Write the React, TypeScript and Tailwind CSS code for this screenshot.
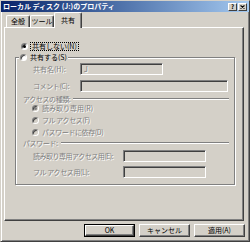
const dim = "text-[#808080] [text-shadow:1px_1px_0_#fff]";

function Radio({ checked, disabled }: { checked?: boolean; disabled?: boolean }) {
  return (
    <span
      className={`w-[7px] h-[7px] shrink-0 rounded-full border border-t-[#808080] border-l-[#808080] border-r-white border-b-white shadow-[inset_1px_1px_0_#404040] flex items-center justify-center ${
        disabled ? "bg-[#d4d0c8]" : "bg-white"
      }`}
    >
      {checked && (
        <span className={`w-[3px] h-[3px] rounded-full ${disabled ? "bg-[#808080]" : "bg-black"}`} />
      )}
    </span>
  );
}

function TextBox({ width, value }: { width: string; value?: string }) {
  return (
    <div
      className={`${width} shrink-0 h-[12px] border border-t-[#808080] border-l-[#808080] border-r-white border-b-white shadow-[inset_1px_1px_0_#404040] bg-[#d4d0c8] flex items-center pl-[3px] ${dim}`}
    >
      {value}
    </div>
  );
}

function Separator({ label }: { label: string }) {
  return (
    <div className="h-[8px] flex items-center pl-[7px] pr-[5px]">
      <span className={`tracking-[-0.4px] ${dim}`}>{label}</span>
      <div className="ml-[3px] flex-1 h-[2px] border-t border-[#808080] bg-white" />
    </div>
  );
}

function Tab({ label, selected }: { label: string; selected?: boolean }) {
  return (
    <div
      className={
        selected
          ? "relative z-10 -mb-[1px] h-[16px] w-[28px] bg-[#d4d0c8] border-t border-l border-t-white border-l-white border-r border-r-[#404040] shadow-[inset_-1px_0_0_#808080] rounded-t-[2px] flex items-center justify-center pb-[1px]"
          : "h-[12px] w-[24px] border-t border-l border-t-white border-l-white border-r border-r-[#404040] shadow-[inset_-1px_0_0_#808080] rounded-t-[2px] flex items-center justify-center"
      }
    >
      {label}
    </div>
  );
}

function Button({ label, isDefault }: { label: string; isDefault?: boolean }) {
  const inner =
    "flex-1 h-full border border-t-white border-l-white border-r-[#404040] border-b-[#404040] shadow-[inset_-1px_-1px_0_#808080] flex items-center justify-center";
  return (
    <div className={`w-[51px] h-[13px] flex ${isDefault ? "border border-black" : ""}`}>
      <div className={inner}>{label}</div>
    </div>
  );
}

export default function App() {
  return (
    <div className="w-[250px] h-[242px] bg-[#d4d0c8] font-['Noto_Sans_CJK_JP',sans-serif] text-[7px] leading-none text-black flex flex-col border border-t-[#d4d0c8] border-l-[#d4d0c8] border-r-[#404040] border-b-[#404040] shadow-[inset_1px_1px_0_#fff,inset_-1px_-1px_0_#808080]">
      {/* title bar */}
      <div className="h-[11px] bg-linear-to-r from-[#0a246a] to-[#a6caf0] flex items-center pl-[2px] pr-[2px]">
        <span className="flex-1 text-white font-bold">ローカル ディスク (J:)のプロパティ</span>
        <div className="flex gap-[1px]">
          <div className="w-[9px] h-[8px] bg-[#d4d0c8] border border-t-white border-l-white border-r-[#404040] border-b-[#404040] flex items-center justify-center font-bold text-[6px]">
            ?
          </div>
          <div className="w-[9px] h-[8px] bg-[#d4d0c8] border border-t-white border-l-white border-r-[#404040] border-b-[#404040] flex items-center justify-center">
            <svg width="5" height="4" viewBox="0 0 5 4">
              <path d="M0.5 0.5L4.5 3.5M4.5 0.5L0.5 3.5" stroke="#000" strokeWidth="1.1" />
            </svg>
          </div>
        </div>
      </div>

      {/* tabs */}
      <div className="h-[15px] flex items-end pl-[5px]">
        <Tab label="全般" />
        <Tab label="ツール" />
        <Tab label="共有" selected />
      </div>

      {/* panel */}
      <div className="ml-[3px] w-[240px] h-[194px] border border-t-white border-l-white border-r-[#404040] border-b-[#404040] shadow-[inset_-1px_-1px_0_#808080] flex flex-col">
        <div className="mt-[14px] ml-[16px] h-[8px] flex items-center">
          <Radio checked />
          <span className="ml-[2px] h-[9px] px-[1px] border border-dotted border-black flex items-center">
            共有しない(N)
          </span>
        </div>

        <div className="mt-[7px] ml-[10px] w-[220px] border border-[#808080] shadow-[inset_1px_1px_0_#fff,1px_1px_0_#fff] flex flex-col pb-[6px]">
          <div className="-mt-[5px] ml-[3px] self-start h-[9px] px-[1px] bg-[#d4d0c8] flex items-center">
            <Radio />
            <span className="ml-[3px]">共有する(S)</span>
          </div>

          <div className="mt-[1px] h-[12px] flex items-center pl-[17px]">
            <span className={`w-[47px] ${dim}`}>共有名(H):</span>
            <TextBox width="w-[83px]" value="J" />
          </div>
          <div className="mt-[5px] h-[12px] flex items-center pl-[17px]">
            <span className={`w-[47px] tracking-[-0.4px] ${dim}`}>コメント(C):</span>
            <TextBox width="w-[148px]" />
          </div>

          <div className="mt-[3px]">
            <Separator label="アクセスの種類:" />
          </div>
          <div className="mt-[1px] h-[8px] flex items-center pl-[16px]">
            <Radio checked disabled />
            <span className={`ml-[3px] ${dim}`}>読み取り専用(R)</span>
          </div>
          <div className="mt-[4px] h-[8px] flex items-center pl-[16px]">
            <Radio disabled />
            <span className={`ml-[3px] tracking-[-0.4px] ${dim}`}>フル アクセス(F)</span>
          </div>
          <div className="mt-[4px] h-[8px] flex items-center pl-[16px]">
            <Radio disabled />
            <span className={`ml-[3px] tracking-[-0.4px] ${dim}`}>パスワードに依存(D)</span>
          </div>

          <div className="mt-[3px]">
            <Separator label="パスワード:" />
          </div>
          <div className="mt-[3px] h-[12px] flex items-center pl-[17px]">
            <span className={`w-[90px] tracking-[-0.5px] ${dim}`}>読み取り専用アクセス用(E):</span>
            <TextBox width="w-[83px]" />
          </div>
          <div className="mt-[4px] h-[12px] flex items-center pl-[17px]">
            <span className={`w-[90px] tracking-[-0.4px] ${dim}`}>フル アクセス用(L):</span>
            <TextBox width="w-[83px]" />
          </div>
        </div>
      </div>

      {/* buttons */}
      <div className="mt-[3px] flex justify-end gap-[4px] pr-[4px]">
        <Button label="OK" isDefault />
        <Button label="キャンセル" />
        <Button label="適用(A)" />
      </div>
    </div>
  );
}
